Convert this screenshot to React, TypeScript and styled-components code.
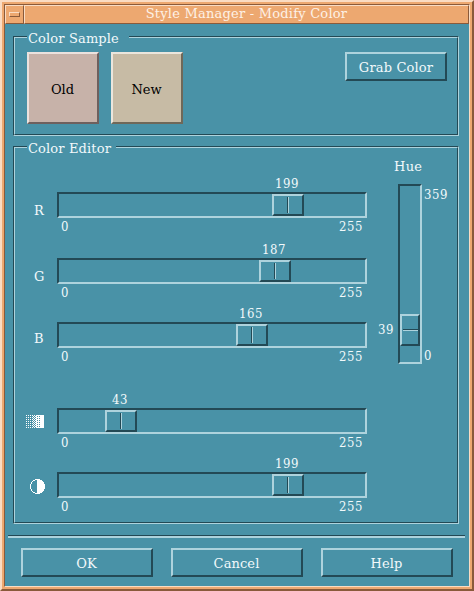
import React from "react";
import styled, { createGlobalStyle, css } from "styled-components";

const teal = "#4992a7";
const tealLight = "#aed3dd";
const tealDark = "#234955";
const orange = "#eda870";
const orangeLight = "#fadcc3";
const orangeDark = "#8a5a3a";

const GlobalStyle = createGlobalStyle`
  *, *::before, *::after { box-sizing: border-box; }
  body { margin: 0; }
`;

const raised = css`
  border: 2px solid;
  border-color: ${tealLight} ${tealDark} ${tealDark} ${tealLight};
`;
const sunken = css`
  border: 2px solid;
  border-color: ${tealDark} ${tealLight} ${tealLight} ${tealDark};
`;
const digits = css`
  font: 13px/15px "DejaVu Serif Condensed", "DejaVu Serif", serif;
  font-stretch: condensed;
  letter-spacing: 0.56px;
`;

const WindowFrame = styled.div`
  width: 474px;
  height: 591px;
  padding: 2px;
  background: ${orange};
  border: 2px solid;
  border-color: ${orangeLight} ${orangeDark} ${orangeDark} ${orangeLight};
  font: 13px/16px "DejaVu Serif", serif;
  color: #f2f9fb;
`;
const WindowInner = styled.div`
  height: 583px;
  width: 466px;
  border: 1px solid;
  border-color: ${orangeDark} ${orangeLight} ${orangeLight} ${orangeDark};
  background: ${teal};
  display: flex;
  flex-direction: column;
`;
const TitleBar = styled.div`
  display: flex;
  height: 19px;
  flex: none;
`;
const TitlePart = styled.div`
  border: 1px solid;
  border-color: ${orangeLight} ${orangeDark} ${orangeDark} ${orangeLight};
  background: ${orange};
`;
const MenuButton = styled(TitlePart)`
  width: 19px;
  padding: 6px 0 0 3px;
`;
const MenuBar = styled(TitlePart)`
  width: 11px;
  height: 5px;
`;
const TitleText = styled(TitlePart)`
  flex: 1;
  text-align: center;
  line-height: 16px;
  letter-spacing: 0.22px;
  color: #fdf1e6;
`;
const Content = styled.div`
  padding: 12px 10px 0 8px;
  display: flex;
  flex-direction: column;
  gap: 10px;
`;
const GroupOuter = styled.section<{ $h: number }>`
  height: ${(p) => p.$h}px;
  border: 1px solid;
  border-color: ${tealDark} ${tealLight} ${tealLight} ${tealDark};
`;
const GroupInner = styled.div`
  height: 100%;
  border: 1px solid;
  border-color: ${tealLight} ${tealDark} ${tealDark} ${tealLight};
  padding-left: 12px;
`;
const Legend = styled.div<{ $w: number }>`
  width: ${(p) => p.$w}px;
  height: 16px;
  margin-top: -8px;
  padding-left: 1px;
  background: ${teal};
  line-height: 18px;
  letter-spacing: 0.14px;
  white-space: nowrap;
`;
const SampleRow = styled.div`
  display: flex;
  margin-top: 6px;
  gap: 12px;
`;
const Swatch = styled.div<{ $bg: string; $hi: string; $lo: string }>`
  width: 72px;
  height: 72px;
  border: 2px solid;
  border-color: ${(p) => `${p.$hi} ${p.$lo} ${p.$lo} ${p.$hi}`};
  background: ${(p) => p.$bg};
  color: #000;
  display: flex;
  align-items: center;
  justify-content: center;
  padding: 4px 1px 0 0;
`;
const PushButton = styled.button<{ $w: number }>`
  ${raised}
  width: ${(p) => p.$w}px;
  height: 29px;
  padding: 2px 1px 0 0;
  background: ${teal};
  color: inherit;
  font: inherit;
  letter-spacing: 0.1px;
  text-align: center;
`;
const GrabButton = styled(PushButton)`
  margin-left: auto;
  margin-right: 10px;
  padding-right: 0;
  letter-spacing: 0.15px;
`;
const EditorBody = styled.div`
  display: flex;
`;
const SliderList = styled.div`
  width: 340px;
  display: flex;
  flex-direction: column;
`;
const SliderRow = styled.div<{ $top: number }>`
  display: flex;
  height: 58px;
  margin-top: ${(p) => p.$top}px;
`;
const SliderLabel = styled.div<{ $top?: number }>`
  width: 30px;
  padding: ${(p) => p.$top ?? 27}px 0 0 7px;
`;
const IconLabel = styled.div<{ $shift: number }>`
  width: 30px;
  padding-top: 23px;
  svg {
    display: block;
    margin-left: ${(p) => p.$shift}px;
  }
`;
const ScaleColumn = styled.div`
  width: 310px;
  ${digits}
`;
const ValueText = styled.div`
  width: 32px;
  height: 16px;
  padding-left: 2px;
  text-align: center;
`;
const Trough = styled.div`
  ${sunken}
  height: 26px;
`;
const Thumb = styled.div`
  ${raised}
  width: 32px;
  height: 22px;
  padding: 1px 0 0 13px;
`;
const ThumbLine = styled.div`
  width: 2px;
  height: 16px;
  background: linear-gradient(90deg, ${tealDark} 50%, ${tealLight} 50%);
`;
const Limits = styled.div`
  display: flex;
  justify-content: space-between;
  padding: 1px 4px 0;
`;
const HueColumn = styled.div`
  display: grid;
  grid-template-columns: 31px 24px 34px;
  grid-template-rows: 28px 180px;
  ${digits}
`;
const HueTitle = styled.div`
  grid-column: 1 / 4;
  padding: 3px 0 0 27px;
  font: 13px/16px "DejaVu Serif", serif;
  letter-spacing: 0.3px;
`;
const HueValue = styled.div`
  padding: 138px 0 0 11px;
`;
const HueTrough = styled.div`
  ${sunken}
  padding-top: 128px;
`;
const HueThumb = styled.div`
  ${raised}
  width: 20px;
  height: 32px;
  padding: 13px 0 0 1px;
`;
const HueLine = styled.div`
  height: 2px;
  width: 15px;
  background: linear-gradient(${tealDark} 50%, ${tealLight} 50%);
`;
const HueLimits = styled.div`
  display: flex;
  flex-direction: column;
  justify-content: space-between;
  padding: 3px 0 1px 2px;
`;
const Separator = styled.div`
  height: 3px;
  margin: 11px 4px 0 3px;
  border-top: 1px solid ${tealDark};
  background: ${tealLight};
`;
const Actions = styled.div`
  display: flex;
  gap: 18px;
  padding: 10px 0 0 16px;
`;

/* Dither ramp: sparse dots, checkerboard, dense dots, then solid. */
function ditherPath() {
  let d = "";
  for (let y = 0; y < 13; y++) {
    for (let x = 0; x < 18; x++) {
      const evenX = x % 2 === 0;
      const evenY = y % 2 === 0;
      const on =
        x < 6 ? evenX && evenY : x < 10 ? evenX === evenY : x < 14 ? evenX || evenY : true;
      if (on) d += `M${x} ${y}h1v1h-1z`;
    }
  }
  return d;
}

const SaturationIcon = () => (
  <svg width="18" height="13" viewBox="0 0 18 13" shapeRendering="crispEdges">
    <path d={ditherPath()} fill="#fff" />
  </svg>
);
const BrightnessIcon = () => (
  <svg width="15" height="15" viewBox="0 0 15 15" shapeRendering="crispEdges">
    <circle cx="7.5" cy="7.5" r="7" fill="none" stroke="#fff" />
    <path d="M7 0.5h1a7 7 0 0 1 0 14h-1z" fill="#fff" />
  </svg>
);

interface SliderProps {
  value: number;
  top: number;
  label: React.ReactNode;
}
const Slider = ({ value, top, label }: SliderProps) => {
  const offset = Math.round((value / 255) * 273);
  return (
    <SliderRow $top={top}>
      {label}
      <ScaleColumn>
        <ValueText style={{ marginLeft: offset }}>{value}</ValueText>
        <Trough>
          <Thumb style={{ marginLeft: offset }}>
            <ThumbLine />
          </Thumb>
        </Trough>
        <Limits>
          <span>0</span>
          <span>255</span>
        </Limits>
      </ScaleColumn>
    </SliderRow>
  );
};

export default function App() {
  return (
    <>
      <GlobalStyle />
      <WindowFrame>
        <WindowInner>
          <TitleBar>
            <MenuButton><MenuBar /></MenuButton>
            <TitleText>Style Manager - Modify Color</TitleText>
          </TitleBar>
          <Content>
            <GroupOuter $h={100}>
              <GroupInner>
                <Legend $w={102}>Color Sample</Legend>
                <SampleRow>
                  <Swatch $bg="#c7b2a9" $hi="#ebe2de" $lo="#6e605e">Old</Swatch>
                  <Swatch $bg="#c7bba5" $hi="#ebe6dd" $lo="#6f6859">New</Swatch>
                  <GrabButton $w={102}>Grab Color</GrabButton>
                </SampleRow>
              </GroupInner>
            </GroupOuter>
            <GroupOuter $h={378}>
              <GroupInner>
                <Legend $w={89}>Color Editor</Legend>
                <EditorBody>
                  <SliderList>
                    <Slider value={199} top={20} label={<SliderLabel>R</SliderLabel>} />
                    <Slider value={187} top={8} label={<SliderLabel>G</SliderLabel>} />
                    <Slider value={165} top={6} label={<SliderLabel $top={25}>B</SliderLabel>} />
                    <Slider value={43} top={28} label={<IconLabel $shift={-1}><SaturationIcon /></IconLabel>} />
                    <Slider value={199} top={6} label={<IconLabel $shift={3}><BrightnessIcon /></IconLabel>} />
                  </SliderList>
                  <HueColumn>
                    <HueTitle>Hue</HueTitle>
                    <HueValue>39</HueValue>
                    <HueTrough><HueThumb><HueLine /></HueThumb></HueTrough>
                    <HueLimits><span>359</span><span>0</span></HueLimits>
                  </HueColumn>
                </EditorBody>
              </GroupInner>
            </GroupOuter>
          </Content>
          <Separator />
          <Actions>
            <PushButton $w={132}>OK</PushButton>
            <PushButton $w={132}>Cancel</PushButton>
            <PushButton $w={132}>Help</PushButton>
          </Actions>
        </WindowInner>
      </WindowFrame>
    </>
  );
}
